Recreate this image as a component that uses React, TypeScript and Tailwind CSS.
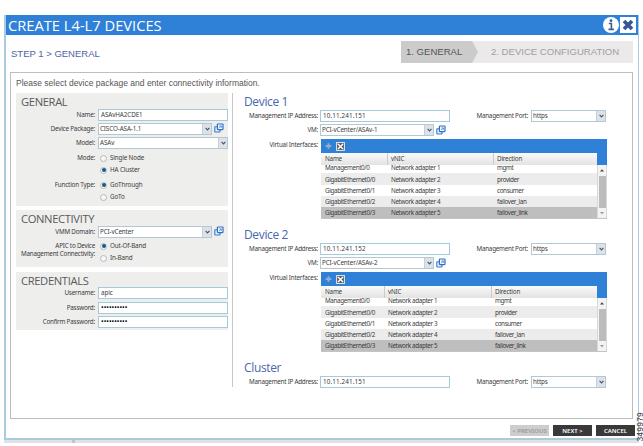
// src/App.tsx
import React from 'react';

const interfaces = [
  { name: 'Management0/0', vnic: 'Network adapter 1', direction: 'mgmt' },
  { name: 'GigabitEthernet0/0', vnic: 'Network adapter 2', direction: 'provider' },
  { name: 'GigabitEthernet0/1', vnic: 'Network adapter 3', direction: 'consumer' },
  { name: 'GigabitEthernet0/2', vnic: 'Network adapter 4', direction: 'failover_lan' },
  { name: 'GigabitEthernet0/3', vnic: 'Network adapter 5', direction: 'failover_link' },
];

const rowColors = ['bg-white', 'bg-[#ececec]', 'bg-white', 'bg-[#ececec]', 'bg-[#bebebe]'];

function TextBox({ value, className = 'tracking-[-0.1px]' }: { value: string; className?: string }) {
  return (
    <div className={`flex h-[12px] w-[130px] items-center border border-[#a3cbdc] bg-white pl-[2px] ${className}`}>
      {value}
    </div>
  );
}

function Select({ value, className = 'w-[114px]' }: { value: string; className?: string }) {
  return (
    <div className={`flex h-[12px] shrink-0 border border-[#b4c8d2] bg-white pl-px tracking-[-0.12px] ${className}`}>
      <span className="flex flex-1 items-center">{value}</span>
      <span className="flex w-[9px] items-center justify-center border-l border-[#c5d0da] bg-[#dde2e8]">
        <svg viewBox="0 0 6 4" className="h-[4px] w-[5px]">
          <path d="M0.7 0.7 L3 3 L5.3 0.7" fill="none" stroke="#44546f" strokeWidth="1.4" />
        </svg>
      </span>
    </div>
  );
}

function OpenIcon() {
  return (
    <svg viewBox="0 0 10 10" className="ml-[2px] h-[10px] w-[10px] shrink-0">
      <rect x="0.8" y="3.8" width="5.2" height="5.2" rx="0.5" fill="#e6f0fb" stroke="#3a78cc" strokeWidth="1.1" />
      <rect x="3.4" y="1" width="5.6" height="5.6" rx="0.5" fill="#f4f9ff" stroke="#2f6fc8" strokeWidth="1.2" />
      <path d="M5 5.2 L7 3.2 M5.4 2.9 H7.3 V4.8" fill="none" stroke="#3a78cc" strokeWidth="0.8" />
    </svg>
  );
}

function Radio({ label, checked = false }: { label: string; checked?: boolean }) {
  return (
    <div className="flex h-[12px] items-center gap-[3px] pl-[2px] tracking-[-0.15px]">
      <span className="flex h-[7px] w-[7px] items-center justify-center rounded-full border border-[#b4babf] bg-[#f7f7f7]">
        {checked && <span className="h-[4px] w-[4px] rounded-full bg-[#1d587f]" />}
      </span>
      <span>{label}</span>
    </div>
  );
}

function Field({ label, children, className = '' }: { label: React.ReactNode; children: React.ReactNode; className?: string }) {
  return (
    <div className={`flex ${className}`}>
      <div className="flex h-[12px] w-[82px] shrink-0 items-center justify-end pr-[3px] text-right tracking-[-0.2px]">
        {label}
      </div>
      {children}
    </div>
  );
}

function PanelTitle({ children }: { children: React.ReactNode }) {
  return (
    <h2 className="pl-[5px] font-['Open_Sans',sans-serif] text-[11.2px] leading-[17px] font-normal tracking-[-0.35px] text-[#5a5a5a]">{children}</h2>
  );
}

function DeviceTitle({ children }: { children: React.ReactNode }) {
  return (
    <h2 className="h-[17px] font-['Open_Sans',sans-serif] text-[12px] leading-[18px] tracking-[-0.35px] text-[#4868ae]">{children}</h2>
  );
}

function Address({ ip }: { ip: string }) {
  return (
    <div className="flex h-[12px] items-center">
      <span className="w-[76px] pr-[2px] text-right tracking-[-0.25px]">Management IP Address:</span>
      <TextBox value={ip} className="tracking-[0.12px]" />
      <span className="w-[81px] pr-[3px] text-right tracking-[-0.25px]">Management Port:</span>
      <Select value="https" className="w-[75px]" />
    </div>
  );
}

function InterfaceTable({ columns }: { columns: string }) {
  return (
    <div className="w-[286px] border-b border-[#c4c4c4] tracking-[-0.36px]">
      <div className="flex h-[14px] items-center gap-[4px] bg-[#2f80d7] pl-[4px]">
        <svg viewBox="0 0 8 8" className="h-[8px] w-[7px]">
          <path d="M4 0.8 V7.2 M0.8 4 H7.2" stroke="#93afc9" strokeWidth="2.2" />
        </svg>
        <svg viewBox="0 0 9 9" className="h-[9px] w-[9px]">
          <rect x="0.6" y="0.6" width="7.8" height="7.8" fill="#4a4f55" stroke="#dfe6ee" strokeWidth="1.1" />
          <path d="M2 2 L7 7 M7 2 L2 7" stroke="#fff" strokeWidth="1.6" />
        </svg>
      </div>
      <div className="flex h-[12px] bg-[#2f80d7]">
        <div className={`grid w-[276px] items-center bg-linear-to-b from-[#fafafa] to-[#e3e3e3] tracking-[-0.2px] ${columns}`}>
          <span className="pl-[4px]">Name</span>
          <span className="flex h-full items-center border-l border-[#ccc] pl-[3px]">vNIC</span>
          <span className="flex h-full items-center border-l border-[#ccc] pl-[3px]">Direction</span>
        </div>
      </div>
      <div className="flex h-[53px]">
        <div className="flex w-[276px] flex-col justify-end overflow-hidden">
          {interfaces.map((row, i) => (
            <div key={row.name} className={`grid h-[11.15px] shrink-0 items-center leading-[11px] ${columns} ${rowColors[i]}`}>
              <span className="pl-[4px]">{row.name}</span>
              <span className="pl-[4px]">{row.vnic}</span>
              <span className="pl-[4px]">{row.direction}</span>
            </div>
          ))}
        </div>
        <div className="flex w-[10px] flex-col items-center border-x border-[#d8d8d8] bg-[#f3f3f3]">
          <svg viewBox="0 0 8 11" className="h-[11px] w-[8px]">
            <path d="M2 6.5 L4 4.3 L6 6.5 Z" fill="#444" />
          </svg>
          <div className="h-[32px] w-[7px] bg-[#bcbcbc]" />
          <svg viewBox="0 0 8 10" className="h-[10px] w-[8px]">
            <path d="M2 4 L4 6.2 L6 4 Z" fill="#999" />
          </svg>
        </div>
      </div>
    </div>
  );
}

function Device({ title, ip, vm, columns }: { title: string; ip: string; vm: string; columns: string }) {
  return (
    <section className="h-[133px]">
      <DeviceTitle>{title}</DeviceTitle>
      <Address ip={ip} />
      <div className="mt-[2px] flex h-[12px] items-center">
        <span className="w-[76px] pr-[2px] text-right tracking-[-0.25px]">VM:</span>
        <Select value={vm} className="w-[114px]" />
        <OpenIcon />
      </div>
      <div className="mt-[3px] flex">
        <span className="h-[12px] w-[77px] pr-[3px] text-right leading-[11px] tracking-[-0.2px]">Virtual Interfaces:</span>
        <InterfaceTable columns={columns} />
      </div>
    </section>
  );
}

export default function App() {
  return (
    <div className="flex h-[446px] w-[643px] overflow-hidden bg-white pt-[15px] pl-[4px] font-['Noto_Sans',sans-serif] text-[6.3px] leading-[8px] whitespace-nowrap text-[#3c3c3c]">
      <div className="w-[635px] shrink-0">
        <div className="flex h-[425px] flex-col border-r border-b-2 border-l-2 border-[#a9cbde] bg-white">
          <header className="flex h-[20px] shrink-0 items-center justify-between bg-[#2f80d7] pr-[2px] pl-[2px]">
            <h1 className="font-['Open_Sans',sans-serif] text-[14.7px] leading-[20px] text-white">CREATE L4-L7 DEVICES</h1>
            <div className="flex items-center gap-[1px]">
              <svg viewBox="0 0 16 16" className="h-[16px] w-[16px]">
                <circle cx="8" cy="8" r="8" fill="#fff" />
                <circle cx="8" cy="3.7" r="1.4" fill="#3c5a96" />
                <path d="M5.8 6.5 H8.4 V12.4 M5.5 12.4 H10.9" fill="none" stroke="#3c5a96" strokeWidth="1.6" />
              </svg>
              <svg viewBox="0 0 16 16" className="h-[16px] w-[16px]">
                <rect width="16" height="16" fill="#fff" />
                <path d="M4 4 L12 12 M12 4 L4 12" stroke="#36569a" strokeWidth="3.7" />
              </svg>
            </div>
          </header>

          <div className="flex h-[37px] shrink-0 items-center justify-between pr-[5px] pl-[5px] font-['Liberation_Sans',sans-serif]">
            <div className="text-[9.5px] text-[#4d66a0]">STEP 1 &gt; GENERAL</div>
            <div className="-mt-[3px] flex h-[22px] w-[232px] items-center bg-[#ebe9e9] text-[9.55px]">
              <div className="flex h-full w-[77px] items-center bg-[#cbcbcb] pl-[5px] text-[#555] [clip-path:polygon(0_0,71px_0,100%_50%,71px_100%,0_100%)]">
                1. GENERAL
              </div>
              <div className="pl-[13px] text-[#a0a0a0]">2. DEVICE CONFIGURATION</div>
            </div>
          </div>

          <main className="ml-[4px] h-[347px] w-[623px] shrink-0 border border-[#bdbdbd] pl-[5px]">
            <p className="h-[20px] font-['Liberation_Sans',sans-serif] text-[8.5px] leading-[21px] text-[#555]">
              Please select device package and enter connectivity information.
            </p>
            <div className="flex">
              <div className="flex h-[294px] w-[217px] flex-col gap-[4px] border-r border-[#c7c7c7]">
                <section className="h-[113px] w-[212px] bg-[#eeeeed]">
                  <PanelTitle>GENERAL</PanelTitle>
                  <Field label="Name:" className="-mt-px">
                    <TextBox value="ASAvHA2CDE1" />
                  </Field>
                  <Field label="Device Package:" className="mt-[2px]">
                    <Select value="CISCO-ASA-1.1" />
                    <OpenIcon />
                  </Field>
                  <Field label="Model:" className="mt-[2px]">
                    <Select value="ASAv" className="w-[130px]" />
                  </Field>
                  <Field label="Mode:" className="mt-[3px]">
                    <div>
                      <Radio label="Single Node" />
                      <Radio label="HA Cluster" checked />
                    </div>
                  </Field>
                  <Field label="Function Type:" className="mt-[3px]">
                    <div>
                      <Radio label="GoThrough" checked />
                      <Radio label="GoTo" />
                    </div>
                  </Field>
                </section>

                <section className="h-[57px] w-[212px] bg-[#eeeeed]">
                  <PanelTitle>CONNECTIVITY</PanelTitle>
                  <Field label="VMM Domain:" className="-mt-px">
                    <Select value="PCI-vCenter" />
                    <OpenIcon />
                  </Field>
                  <div className="mt-[2px] flex">
                    <div className="flex w-[82px] flex-col items-end pt-[2px] pr-[3px] leading-[8px] tracking-[-0.22px]">
                      <span>APIC to Device</span>
                      <span>Management Connectivity:</span>
                    </div>
                    <div>
                      <Radio label="Out-Of-Band" checked />
                      <Radio label="In-Band" />
                    </div>
                  </div>
                </section>

                <section className="mt-px h-[58px] w-[212px] bg-[#eeeeed]">
                  <PanelTitle>CREDENTIALS</PanelTitle>
                  <Field label="Username:" className="-mt-[2px]">
                    <TextBox value="apic" />
                  </Field>
                  <Field label="Password:" className="mt-[3px]">
                    <TextBox value="••••••••••" className="text-[7px] text-black" />
                  </Field>
                  <Field label="Confirm Password:" className="mt-[2px]">
                    <TextBox value="••••••••••" className="text-[7px] text-black" />
                  </Field>
                </section>
              </div>

              <div className="pl-[11px]">
                <Device title="Device 1" ip="10.11.241.151" vm="PCI-vCenter/ASAv-1" columns="grid-cols-[66px_106px_104px]" />
                <Device title="Device 2" ip="10.11.241.152" vm="PCI-vCenter/ASAv-2" columns="grid-cols-[63px_107px_106px]" />
                <section>
                  <DeviceTitle>Cluster</DeviceTitle>
                  <Address ip="10.11.241.151" />
                </section>
              </div>
            </div>
          </main>

          <footer className="flex justify-end gap-[4px] pt-[6px] pr-[3px] text-[6px] font-semibold">
            <button className="h-[11px] w-[39px] bg-[#cdcdcd] leading-[10px] text-[#999]">&lt; PREVIOUS</button>
            <button className="h-[11px] w-[39px] bg-[#393939] leading-[10px] text-white">NEXT &gt;</button>
            <button className="h-[11px] w-[39px] bg-[#393939] leading-[10px] text-white">CANCEL</button>
          </footer>
        </div>
        <div className="flex h-[3px] bg-[#e2e2e4] pl-[68px]">
          <span className="w-[3px] bg-[#c6c6ca]" />
        </div>
      </div>
      <div className="-ml-[2px] self-end pb-[4px] font-['Liberation_Sans',sans-serif] text-[8.5px] leading-[7px] [writing-mode:vertical-rl]">
        <span className="inline-block rotate-180 tracking-[0.2px] text-[#333]">349979</span>
      </div>
    </div>
  );
}
